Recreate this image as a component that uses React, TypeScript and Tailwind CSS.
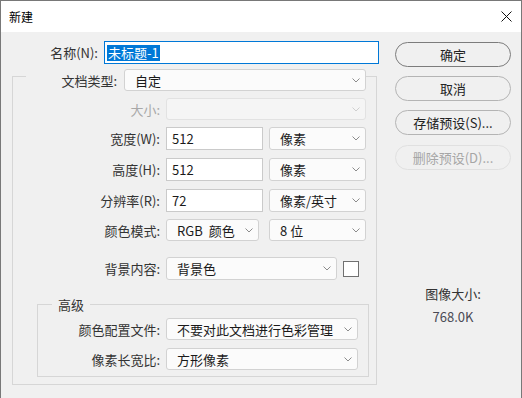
import React from "react";

function Chevron({ muted }: { muted?: boolean }) {
  return (
    <svg width="8" height="5" viewBox="0 0 8 5" className="shrink-0" aria-hidden>
      <path
        d="M0.5 0.5 L4 4 L7.5 0.5"
        fill="none"
        stroke={muted ? "#cfcfcf" : "#8c8c8c"}
        strokeWidth="1"
      />
    </svg>
  );
}

function Select({
  text,
  className,
  disabled,
}: {
  text?: React.ReactNode;
  className: string;
  disabled?: boolean;
}) {
  return (
    <div
      className={
        "flex shrink-0 items-center justify-between rounded-[3px] border pl-[10px] pr-[5px] " +
        (disabled
          ? "border-[#e2e2e2] bg-[#f5f5f5] "
          : "border-[#d2d2d2] bg-[#fbfbfb] text-[#1a1a1a] ") +
        className
      }
    >
      <span className="whitespace-nowrap leading-none">{text}</span>
      <Chevron muted={disabled} />
    </div>
  );
}

function Field({ value, className }: { value: string; className: string }) {
  return (
    <div
      className={
        "flex shrink-0 items-center border border-[#cacaca] bg-white pl-[5px] text-[#1a1a1a] " +
        className
      }
    >
      <span className="leading-none">{value}</span>
    </div>
  );
}

function Label({
  children,
  className,
  disabled,
}: {
  children: React.ReactNode;
  className: string;
  disabled?: boolean;
}) {
  return (
    <span
      className={
        "shrink-0 whitespace-nowrap text-right leading-none " +
        (disabled ? "text-[#a8a8a8] " : "text-[#333] ") +
        className
      }
    >
      {children}
    </span>
  );
}

function Button({
  children,
  className,
  primary,
  disabled,
}: {
  children: React.ReactNode;
  className: string;
  primary?: boolean;
  disabled?: boolean;
}) {
  return (
    <div
      className={
        "flex h-[25px] w-[116px] items-center justify-center rounded-full border bg-[#f0f0f0] leading-none " +
        (primary
          ? "border-[#7c7c7c] text-[#222] "
          : disabled
            ? "border-[#e0e0e0] text-[#a6a6a6] "
            : "border-[#b4b4b4] text-[#222] ") +
        className
      }
    >
      {children}
    </div>
  );
}

export default function App() {
  return (
    <div className="h-[398px] w-[522px] overflow-hidden border-x border-t border-[#787878] bg-[#f0f0f0] font-['Noto_Sans_CJK_SC','Noto_Sans',sans-serif] text-[13px]">
      {/* title bar */}
      <div className="flex h-[31px] items-center justify-between bg-white pl-[8px] pr-[9px]">
        <span className="text-[12px] leading-none text-black">新建</span>
        <svg width="11" height="11" viewBox="0 0 11 11" aria-hidden>
          <path d="M0.5 0.5 L10.5 10.5 M10.5 0.5 L0.5 10.5" stroke="#111" strokeWidth="1" />
        </svg>
      </div>

      <div className="flex">
        {/* left column */}
        <div className="w-[394px] shrink-0">
          <div className="mt-[9px] flex h-[23px] items-center">
            <Label className="w-[97px]">名称(N):</Label>
            <div className="ml-[6px] flex h-[23px] w-[275px] items-center border border-[#0078d7] bg-white pl-[2px]">
              <span className="bg-[#0078d7] px-[1px] py-[1px] leading-[14px] text-white">未标题-1</span>
            </div>
          </div>

          {/* outer group */}
          <div className="ml-[11px] mt-[12px] h-[309px] w-[365px] border border-[#d6d6d6]">
            <div className="-mt-[8px] ml-[13px] flex h-[22px] w-[340px] items-center bg-[#f0f0f0]">
              <Label className="w-[91px]">文档类型:</Label>
              <Select text="自定" className="ml-[7px] h-[22px] w-[242px]" />
            </div>

            <div className="mt-[7px] flex h-[22px] items-center">
              <Label disabled className="w-[147px]">大小:</Label>
              <Select disabled className="ml-[6px] h-[22px] w-[200px]" />
            </div>

            <div className="mt-[7px] flex h-[23px] items-center">
              <Label className="w-[147px]">宽度(W):</Label>
              <Field value="512" className="ml-[6px] h-[23px] w-[97px]" />
              <Select text="像素" className="ml-[6px] h-[23px] w-[97px]" />
            </div>

            <div className="mt-[8px] flex h-[23px] items-center">
              <Label className="w-[147px]">高度(H):</Label>
              <Field value="512" className="ml-[6px] h-[23px] w-[97px]" />
              <Select text="像素" className="ml-[6px] h-[23px] w-[97px]" />
            </div>

            <div className="mt-[8px] flex h-[23px] items-center">
              <Label className="w-[147px]">分辨率(R):</Label>
              <Field value="72" className="ml-[6px] h-[23px] w-[97px]" />
              <Select text="像素/英寸" className="ml-[6px] h-[23px] w-[97px]" />
            </div>

            <div className="mt-[7px] flex h-[22px] items-center">
              <Label className="w-[147px]">颜色模式:</Label>
              <Select
                text={
                  <>
                    RGB<span className="ml-[6px]">颜色</span>
                  </>
                }
                className="ml-[6px] h-[22px] w-[93px]"
              />
              <Select text="8 位" className="ml-[10px] h-[22px] w-[97px]" />
            </div>

            <div className="mt-[16px] flex h-[23px] items-center">
              <Label className="w-[147px]">背景内容:</Label>
              <Select text="背景色" className="ml-[6px] h-[23px] w-[171px]" />
              <div className="ml-[6px] h-[16px] w-[16px] border border-[#707070] bg-white" />
            </div>

            {/* inner group */}
            <div className="ml-[24px] mt-[24px] h-[73px] w-[332px] border border-[#d6d6d6]">
              <div className="-mt-[9px] ml-[14px] flex h-[17px] w-[38px] items-center justify-center bg-[#f0f0f0]">
                <span className="leading-none text-[#333]">高级</span>
              </div>
              <div className="mt-[5px] flex h-[22px] items-center">
                <Label className="w-[122px]">颜色配置文件:</Label>
                <Select text="不要对此文档进行色彩管理" className="ml-[6px] h-[22px] w-[192px]" />
              </div>
              <div className="mt-[8px] flex h-[22px] items-center">
                <Label className="w-[122px]">像素长宽比:</Label>
                <Select text="方形像素" className="ml-[6px] h-[22px] w-[192px]" />
              </div>
            </div>
          </div>
        </div>

        {/* right column */}
        <div className="flex w-[116px] shrink-0 flex-col">
          <Button primary className="mt-[10px]">确定</Button>
          <Button className="mt-[9px]">取消</Button>
          <Button className="mt-[9px]">存储预设(S)...</Button>
          <Button disabled className="mt-[10px]">删除预设(D)...</Button>
          <div className="mt-[115px] text-center leading-[17px] text-[#333]">图像大小:</div>
          <div className="mt-[6px] text-center leading-[17px] text-[#4a4a55]">768.0K</div>
        </div>
      </div>
    </div>
  );
}
